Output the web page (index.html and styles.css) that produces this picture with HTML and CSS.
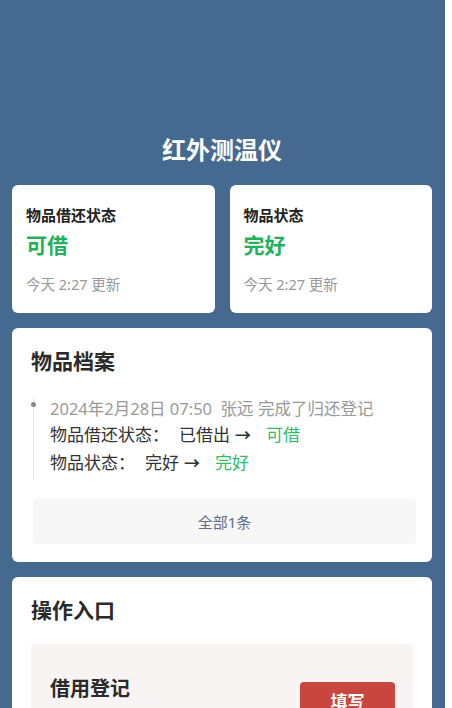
FILE: index.html
```html
<!DOCTYPE html>
<html lang="zh">
<head>
<meta charset="utf-8">
<link rel="stylesheet" href="styles.css">
</head>
<body>
<div class="page">
  <div class="hero">
    <h1 class="title">红外测温仪</h1>
  </div>
  <div class="stats">
    <div class="stat-card">
      <div class="stat-label">物品借还状态</div>
      <div class="stat-value">可借</div>
      <div class="stat-time">今天 2:27 更新</div>
    </div>
    <div class="stat-card">
      <div class="stat-label">物品状态</div>
      <div class="stat-value">完好</div>
      <div class="stat-time">今天 2:27 更新</div>
    </div>
  </div>
  <div class="card archive">
    <h2 class="card-title">物品档案</h2>
    <div class="timeline">
      <span class="dot"></span>
      <div class="tl-head">2024年2月28日 07:50&nbsp;&nbsp;张远 完成了归还登记</div>
      <div class="tl-row"><span class="tl-key">物品借还状态：</span><span class="tl-old">已借出</span><span class="arrow">→</span><span class="tl-new">可借</span></div>
      <div class="tl-row"><span class="tl-key">物品状态：</span><span class="tl-old">完好</span><span class="arrow">→</span><span class="tl-new">完好</span></div>
    </div>
    <div class="all-btn">全部1条</div>
  </div>
  <div class="card ops">
    <h2 class="card-title">操作入口</h2>
    <div class="op-box">
      <div class="op-name">借用登记</div>
      <div class="op-btn">填写</div>
    </div>
  </div>
</div>
</body>
</html>
```
FILE: styles.css
```css
html, body {
  margin: 0;
  padding: 0;
  background: #ffffff;
  font-family: "Noto Sans", "Noto Sans CJK SC", sans-serif;
  overflow: hidden;
}
.page {
  width: 445px;
  height: 708px;
  overflow: hidden;
  background: #46698f;
  padding: 0 13px 0 12px;
  box-sizing: border-box;
}
.hero {
  height: 185px;
  display: flex;
  align-items: flex-end;
  justify-content: center;
}
.title {
  margin: 0 0 20px;
  color: #ffffff;
  font-size: 24px;
  font-weight: 700;
  line-height: 30px;
}
.stats {
  display: flex;
  gap: 15px;
}
.stat-card {
  flex: 1;
  background: #fff;
  border-radius: 6px;
  padding: 20px 14px 20px;
  height: 128px;
  box-sizing: border-box;
}
.stat-label {
  font-size: 15px;
  line-height: 20px;
  font-weight: 700;
  color: #222;
}
.stat-value {
  margin-top: 6px;
  font-size: 21px;
  line-height: 28px;
  font-weight: 700;
  color: #1fb25a;
}
.stat-time {
  margin-top: 16px;
  font-size: 14.5px;
  line-height: 18px;
  color: #999;
}
.card {
  background: #fff;
  border-radius: 6px;
  margin-top: 15px;
}
.card-title {
  margin: 0;
  padding: 20px 0 0 19px;
  font-size: 21px;
  line-height: 26px;
  font-weight: 700;
  color: #2a2a2a;
}
.archive {
  padding-bottom: 18px;
}
.timeline {
  position: relative;
  margin: 23px 0 0 21px;
  padding-left: 16px;
  border-left: 1px solid #e4e4e4;
  padding-bottom: 3px;
}
.dot {
  position: absolute;
  left: -3px;
  top: 5px;
  width: 5px;
  height: 5px;
  border-radius: 50%;
  background: #888;
}
.tl-head {
  font-size: 16.5px;
  line-height: 24px;
  color: #999;
}
.tl-row {
  font-size: 17px;
  line-height: 28px;
  color: #333;
  display: flex;
  align-items: center;
}
.tl-key {
  margin-right: 10px;
}
.arrow {
  font-weight: 600;
  font-size: 16px;
  margin: 0 15px 0 5px;
  color: #333;
}
.tl-new {
  color: #2ebd6b;
}
.all-btn {
  margin: 19px 16px 0 21px;
  height: 45px;
  background: #f7f7f7;
  border-radius: 4px;
  display: flex;
  align-items: center;
  justify-content: center;
  font-size: 15px;
  color: #5e6c8c;
}
.ops {
  padding-bottom: 30px;
}
.op-box {
  margin: 21px 19px 0 19px;
  background: #f8f4f3;
  border-radius: 4px;
  padding: 31px 18px 20px 19px;
  display: flex;
  justify-content: space-between;
  align-items: flex-start;
}
.op-name {
  font-size: 20px;
  line-height: 28px;
  font-weight: 700;
  color: #2a2a2a;
}
.op-btn {
  width: 95px;
  height: 36px;
  margin-top: 7px;
  background: #c9463f;
  border-radius: 4px;
  color: #fff;
  font-size: 17px;
  font-weight: 700;
  display: flex;
  align-items: center;
  justify-content: center;
}
```
